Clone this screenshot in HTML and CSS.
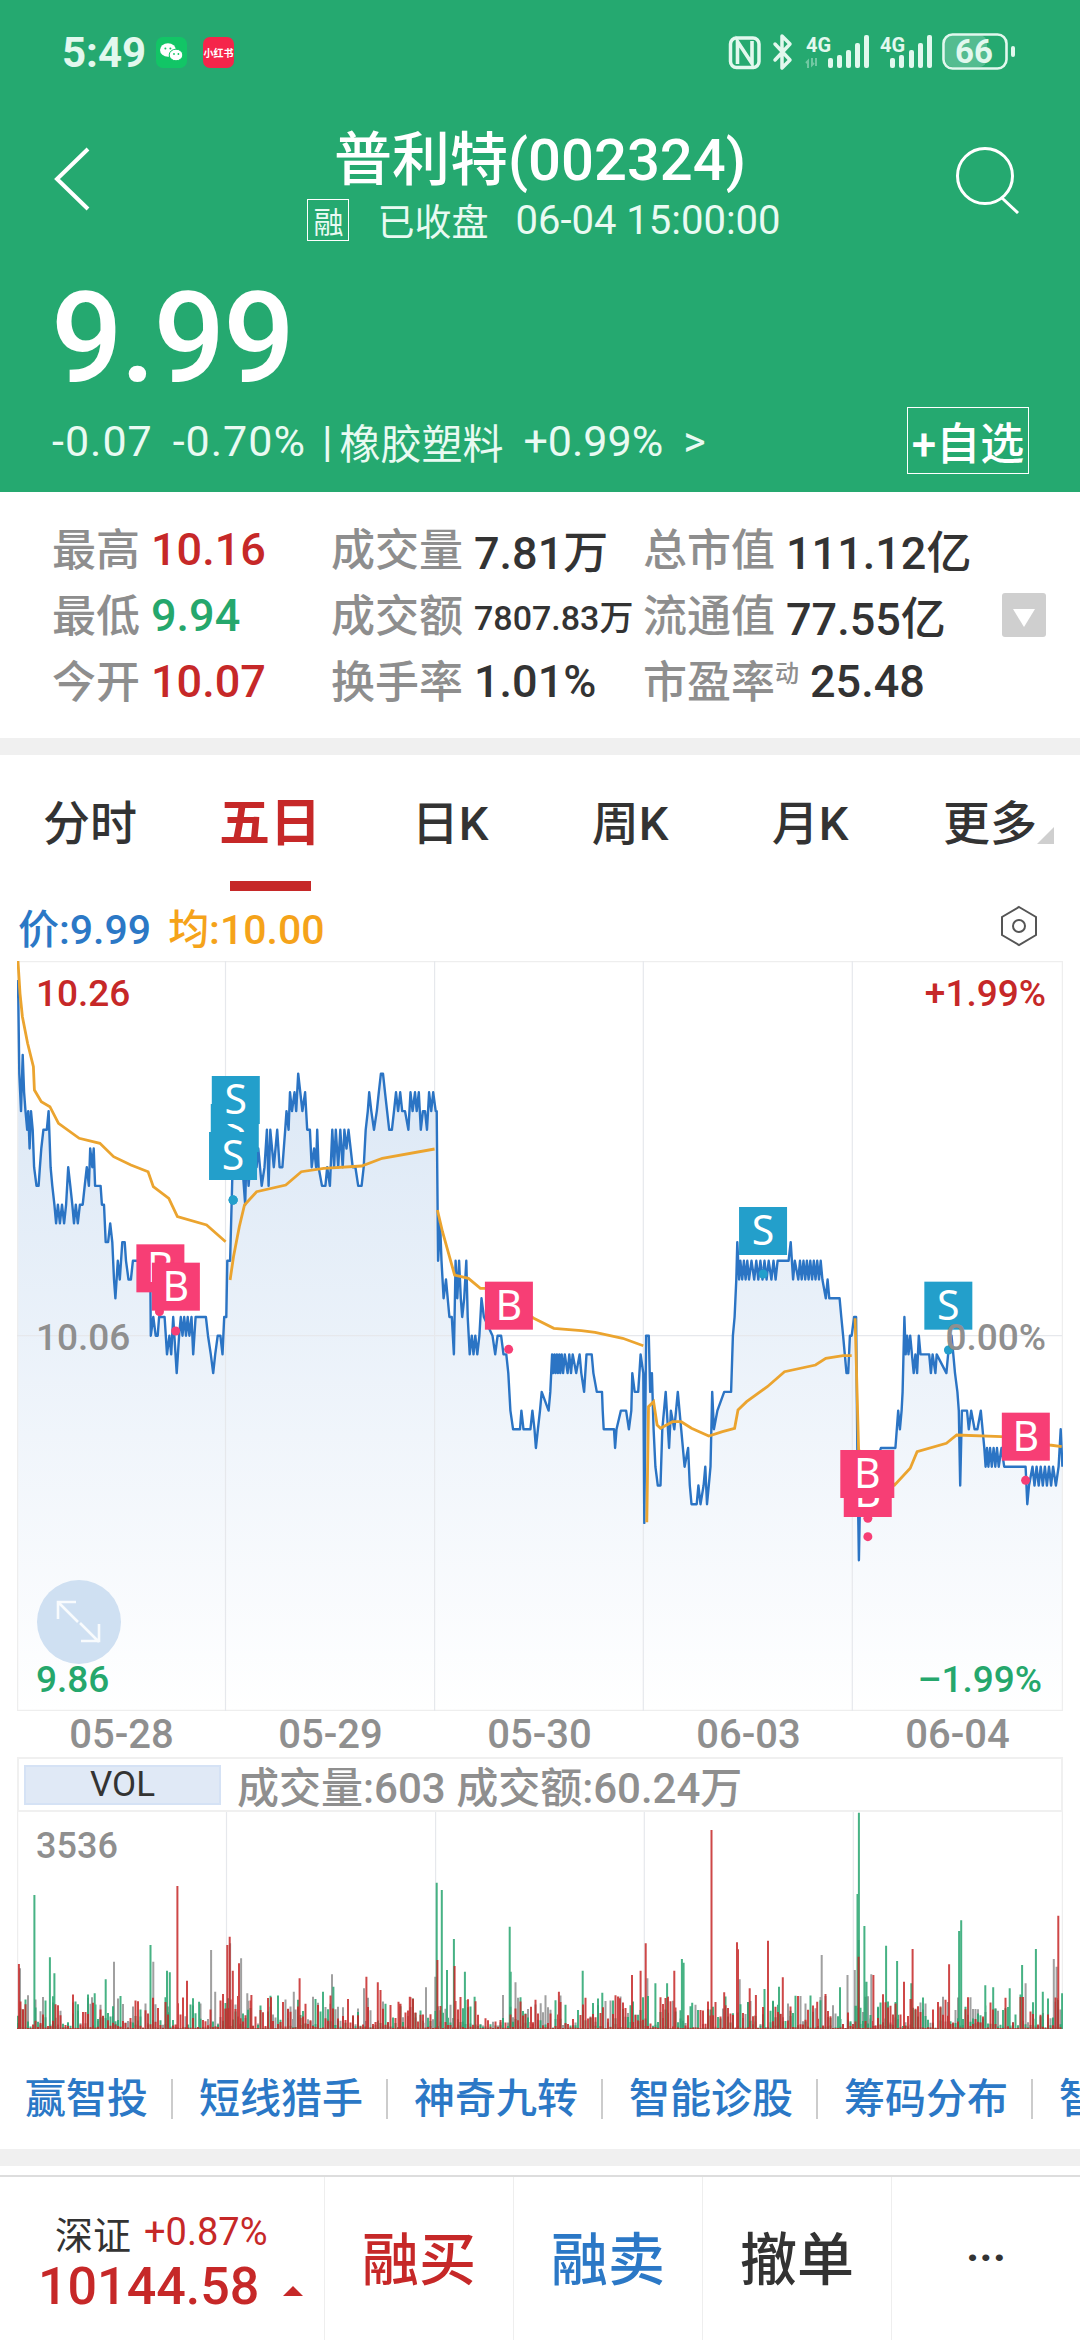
FILE: index.html
```html
<!DOCTYPE html>
<html lang="zh-CN">
<head>
  <meta charset="UTF-8">
  <meta name="viewport" content="width=device-width, initial-scale=1.0">
  <title>普利特(002324)</title>
  <link rel="stylesheet" href="styles.css">
</head>
<body>
  <header class="quote-head">
    <div class="status-bar">
      <span class="clock">5:49</span>
      <span class="app-icon wechat">
        <svg width="31" height="31" viewBox="0 0 31 31">
          <ellipse cx="12" cy="13" rx="8" ry="6.8" fill="#fff"/>
          <ellipse cx="20" cy="18" rx="6.8" ry="5.8" fill="#fff" stroke="#12c566" stroke-width="1"/>
          <circle cx="9.4" cy="11.5" r="1" fill="#12c566"/>
          <circle cx="14.4" cy="11.5" r="1" fill="#12c566"/>
          <circle cx="18" cy="17" r=".9" fill="#12c566"/>
          <circle cx="22.4" cy="17" r=".9" fill="#12c566"/>
        </svg>
      </span>
      <span class="app-icon rednote">小红书</span>
      <svg class="status-icons" width="293" height="40" viewBox="725 32 293 40">
        <rect x="730.5" y="38" width="28.5" height="29.5" rx="6" fill="none" stroke="#e2f8ee" stroke-width="3.5"/>
        <path d="M737.5 64V41.5l14.5 22V41" fill="none" stroke="#e2f8ee" stroke-width="3.6"/>
        <g fill="#e2f8ee">
          <rect x="828" y="58" width="5" height="10" rx="2"/>
          <rect x="837" y="55" width="5" height="13" rx="2"/>
          <rect x="846" y="50" width="5" height="18" rx="2"/>
          <rect x="855" y="43" width="5" height="25" rx="2"/>
          <rect x="864" y="35" width="5" height="33" rx="2"/>
          <rect x="890" y="58" width="5" height="10" rx="2"/>
          <rect x="899" y="55" width="5" height="13" rx="2"/>
          <rect x="909" y="50" width="5" height="18" rx="2"/>
          <rect x="918" y="43" width="5" height="25" rx="2"/>
          <rect x="927" y="35" width="5" height="33" rx="2"/>
          <rect x="1011" y="46" width="4" height="11" rx="2"/>
          <rect x="945" y="35" width="42" height="32" rx="8" opacity=".25"/>
          <path d="M808 68v-7l-2 2M812 58v7l2-2M816 58v8" stroke="#e2f8ee" stroke-width="2" fill="none" opacity=".4"/>
        </g>
        <path d="M775 44l15 16-8 8v-32l8 8-15 16" fill="none" stroke="#e2f8ee" stroke-width="3.5" stroke-linejoin="round" stroke-linecap="round"/>
        <rect x="943.5" y="34.5" width="63" height="34" rx="9" fill="none" stroke="#e2f8ee" stroke-width="2.6"/>
        <text class="net-label" x="806" y="52">4G</text>
        <text class="net-label" x="880" y="52">4G</text>
        <text class="battery-label" x="974" y="63">66</text>
      </svg>
    </div>

    <div class="topbar">
      <svg class="back-icon" width="38" height="64" viewBox="0 0 38 64">
        <path d="M35 2L4 32l31 30" fill="none" stroke="#fff" stroke-width="4"/>
      </svg>
      <div class="stock-title">
        <h1>普利特(002324)</h1>
        <p><span class="margin-tag">融</span><span class="market-state">已收盘</span><span>06-04 15:00:00</span></p>
      </div>
      <svg class="search-icon" width="66" height="68" viewBox="0 0 66 68">
        <circle cx="31" cy="30" r="27.5" fill="none" stroke="#fff" stroke-width="3"/>
        <path d="M48 52l16 15" stroke="#fff" stroke-width="3"/>
      </svg>
    </div>

    <div class="last-price">9.99</div>

    <div class="change-row">
      <div class="change-text">
        <span class="wide">-0.07</span>
        <span class="wide">-0.70%</span>
        <span class="pipe">|</span>
        <span class="sector">橡胶塑料</span>
        <span>+0.99%</span>
        <span>&gt;</span>
      </div>
      <button class="watch-btn">+自选</button>
    </div>
  </header>

  <section class="stats">
    <div class="stat"><label>最高</label><b class="up">10.16</b></div>
    <div class="stat"><label>成交量</label><b>7.81万</b></div>
    <div class="stat"><label>总市值</label><b>111.12亿</b></div>
    <div class="stat"><label>最低</label><b class="down">9.94</b></div>
    <div class="stat"><label>成交额</label><b class="small">7807.83万</b></div>
    <div class="stat"><label>流通值</label><b>77.55亿</b></div>
    <div class="stat"><label>今开</label><b class="up">10.07</b></div>
    <div class="stat"><label>换手率</label><b>1.01%</b></div>
    <div class="stat"><label>市盈率<sup>动</sup></label><b>25.48</b></div>
    <span class="stats-toggle"></span>
  </section>

  <div class="divider"></div>

  <nav class="tabs">
    <a>分时</a>
    <a class="active">五日</a>
    <a>日K</a>
    <a>周K</a>
    <a>月K</a>
    <a class="has-menu">更多</a>
  </nav>

  <div class="legend">
    <span class="price-tag">价:9.99</span>
    <span class="avg-tag">均:10.00</span>
    <svg class="legend-icon" width="38" height="42" viewBox="0 0 38 42">
      <path d="M19 2l17 10v18L19 40 2 30V12z" fill="none" stroke="#555" stroke-width="2"/>
      <circle cx="19" cy="21" r="6" fill="none" stroke="#555" stroke-width="2"/>
    </svg>
  </div>

  <div class="plot">
    <svg id="price-chart" width="1046" height="750" viewBox="17 961 1046 750"></svg>
    <span class="axis up axis-top-left">10.26</span>
    <span class="axis gray axis-mid-left">10.06</span>
    <span class="axis down axis-low-left">9.86</span>
    <span class="axis up axis-top-right">+1.99%</span>
    <span class="axis gray axis-mid-right">0.00%</span>
    <span class="axis down axis-low-right">–1.99%</span>
    <span class="expand-btn">
      <svg width="84" height="84" viewBox="0 0 84 84">
        <path d="M21 39V22h18M22 23l19 19M44 61h18V44M62 62L43 43" fill="none" stroke="#fff" stroke-width="2.6" opacity=".85"/>
      </svg>
    </span>
  </div>

  <div class="dates">
    <span>05-28</span><span>05-29</span><span>05-30</span><span>06-03</span><span>06-04</span>
  </div>

  <div class="vol-head">
    <span class="vol-tag">VOL</span>
    <span class="vol-text">成交量:603 成交额:60.24万</span>
  </div>

  <div class="vol-plot">
    <svg id="vol-chart" width="1046" height="217" viewBox="17 1812 1046 217"></svg>
    <span class="vol-max">3536</span>
  </div>

  <div class="tools">
    <a>赢智投</a>
    <a>短线猎手</a>
    <a>神奇九转</a>
    <a>智能诊股</a>
    <a>筹码分布</a>
    <a>智能选股</a>
  </div>

  <div class="divider bottom-gap"></div>

  <footer class="trade-bar">
    <div class="index-cell">
      <div class="index-top"><span>深证</span><span class="up">+0.87%</span></div>
      <div class="index-value up">10144.58<i class="arrow-up"></i></div>
    </div>
    <a class="trade-btn up">融买</a>
    <a class="trade-btn blue">融卖</a>
    <a class="trade-btn">撤单</a>
    <a class="trade-btn more">···</a>
  </footer>

  <script src="chart.js"></script>
</body>
</html>
```

FILE: styles.css
```css
* {
  box-sizing: border-box;
}

body {
  margin: 0;
  width: 1080px;
  height: 2340px;
  overflow: hidden;
  background: #fff;
  color: #333;
  font-family: Roboto, "Noto Sans CJK SC", sans-serif;
  font-weight: 500;
}

.up { color: #c62828; }
.down { color: #25a76c; }
.gray { color: #8f8f8f; }
.blue { color: #2b78c6; }

/* green quote header */
.quote-head {
  height: 492px;
  background: #25a970;
  color: #fff;
}

.status-bar {
  display: flex;
  align-items: center;
  height: 104px;
  padding-left: 62px;
}

.clock {
  width: 94px;
  font-size: 42px;
  font-weight: 700;
  color: #e2f8ee;
}

.app-icon {
  display: flex;
  align-items: center;
  justify-content: center;
  width: 31px;
  height: 31px;
  border-radius: 7px;
}

.wechat {
  background: #12c566;
}

.rednote {
  margin-left: 16px;
  background: #f5254a;
  color: #fff;
  font-size: 10px;
  font-weight: 700;
  white-space: nowrap;
}

.status-icons {
  margin-left: 491px;
}

.net-label {
  font-size: 20px;
  font-weight: 700;
  fill: #e2f8ee;
}

.battery-label {
  font-size: 33px;
  font-weight: 700;
  fill: #e2f8ee;
  text-anchor: middle;
}

.topbar {
  display: grid;
  grid-template-columns: 1fr auto 1fr;
  height: 128px;
  margin-top: 16px;
  padding: 0 53px;
}

.back-icon {
  margin-top: 27px;
}

.search-icon {
  justify-self: end;
  margin: 26px 7px 0 0;
}

.stock-title {
  text-align: center;
}

.stock-title h1 {
  margin: 0;
  font-size: 58px;
  font-weight: 500;
  line-height: 80px;
}

.stock-title p {
  display: flex;
  align-items: center;
  justify-content: center;
  margin: -2px 0 0;
  padding-left: 8px;
  height: 44px;
  font-size: 40px;
  font-weight: 400;
  color: #e9faf2;
  white-space: nowrap;
}

.margin-tag {
  display: flex;
  align-items: center;
  justify-content: center;
  width: 42px;
  height: 42px;
  margin-right: 28px;
  border: 1px solid #fff;
  font-size: 30px;
}

.market-state {
  margin-right: 27px;
  font-size: 37px;
}

.last-price {
  margin: 25px 0 0 51px;
  font-size: 126px;
  font-weight: 500;
  line-height: 130px;
  letter-spacing: -2px;
}

.change-row {
  display: flex;
  align-items: center;
  justify-content: space-between;
  height: 67px;
  margin-top: 4px;
  padding: 0 51px 0 52px;
}

.change-text {
  display: flex;
  align-items: center;
  gap: 20px;
  font-size: 43px;
  font-weight: 400;
  color: #e9faf2;
}

.wide {
  letter-spacing: 1px;
}

.pipe {
  margin: 0 -13px 0 -4px;
}

.sector {
  font-size: 41px;
}

.watch-btn {
  width: 122px;
  height: 67px;
  padding: 0;
  border: 1px solid #fff;
  background: none;
  color: #fff;
  font-family: inherit;
  font-size: 44px;
  font-weight: 500;
  white-space: nowrap;
}

/* day stats */
.stats {
  position: relative;
  display: grid;
  grid-template-columns: 279px 312px 1fr;
  grid-auto-rows: 66px;
  height: 246px;
  padding: 24px 0 0 52px;
}

.stat {
  display: flex;
  align-items: center;
  gap: 11px;
  font-size: 44px;
}

.stat label {
  margin-bottom: 4px;
  color: #8e8e8e;
  white-space: nowrap;
}

.stat sup {
  font-size: 24px;
  line-height: 0;
  vertical-align: 16px;
}

.stat b {
  font-weight: 500;
  font-size: 45px;
  white-space: nowrap;
}

.stat b.small {
  font-size: 34px;
}

.stats-toggle {
  position: absolute;
  top: 101px;
  left: 1002px;
  width: 44px;
  height: 44px;
  border-radius: 3px;
  background: #cfcfcf;
}

.stats-toggle::after {
  content: "";
  position: absolute;
  top: 16px;
  left: 11px;
  border-top: 18px solid #fff;
  border-left: 11px solid transparent;
  border-right: 11px solid transparent;
}

.divider {
  height: 17px;
  background: #f0f0f0;
}

/* period tabs */
.tabs {
  display: flex;
  height: 136px;
}

.tabs a {
  position: relative;
  flex: 1;
  text-align: center;
  font-size: 47px;
  line-height: 138px;
}

.tabs a.active {
  color: #c62828;
  font-size: 51px;
  font-weight: 700;
}

.tabs a.active::after {
  content: "";
  position: absolute;
  left: 50px;
  bottom: 0;
  width: 81px;
  height: 10px;
  background: #c62828;
}

.tabs a.has-menu::after {
  content: "";
  position: absolute;
  right: 26px;
  top: 72px;
  border-bottom: 17px solid #cfcfcf;
  border-left: 17px solid transparent;
}

.legend {
  display: flex;
  align-items: center;
  height: 70px;
  padding: 0 42px 0 18px;
  font-size: 41px;
}

.price-tag {
  color: #2b78c6;
}

.avg-tag {
  margin-left: 17px;
  color: #f5a31a;
}

.legend-icon {
  margin-left: auto;
}

/* intraday chart */
.plot {
  position: relative;
  width: 1046px;
  height: 750px;
  margin-left: 17px;
}

.plot svg,
.vol-plot svg {
  display: block;
}

.axis {
  position: absolute;
  font-size: 37px;
  line-height: 44px;
}

.axis-top-left { left: 19px; top: 11px; }
.axis-mid-left { left: 19px; top: 355px; }
.axis-low-left { left: 19px; top: 697px; }
.axis-top-right { right: 17px; top: 11px; }
.axis-mid-right { right: 17px; top: 355px; }
.axis-low-right { right: 21px; top: 697px; }

.expand-btn {
  position: absolute;
  left: 20px;
  top: 619px;
  width: 84px;
  height: 84px;
  border-radius: 50%;
  background: #cfe0f2;
}

.dates {
  display: grid;
  grid-template-columns: repeat(5, 209px);
  height: 46px;
  margin-left: 17px;
  font-size: 40px;
  line-height: 48px;
  text-align: center;
  color: #8f8f8f;
}

/* volume pane */
.vol-head {
  display: flex;
  align-items: center;
  width: 1046px;
  height: 55px;
  margin-left: 17px;
  padding-left: 5px;
  border: 2px solid #f0f0f0;
}

.vol-tag {
  width: 197px;
  height: 40px;
  border: 2px solid #d5e2f5;
  background: #e0e9f6;
  font-size: 35px;
  font-weight: 400;
  line-height: 36px;
  text-align: center;
}

.vol-text {
  margin-left: 16px;
  font-size: 42px;
  color: #8f8f8f;
}

.vol-plot {
  position: relative;
  width: 1046px;
  height: 217px;
  margin-left: 17px;
}

.vol-max {
  position: absolute;
  left: 19px;
  top: 12px;
  font-size: 36px;
  line-height: 44px;
  color: #8f8f8f;
}

/* tool shortcuts */
.tools {
  display: flex;
  align-items: center;
  height: 120px;
  padding: 20px 0 0 25px;
  overflow: hidden;
  white-space: nowrap;
}

.tools a {
  flex: none;
  width: 189px;
  margin-right: 26px;
  border-right: 2px solid #ccc;
  font-size: 41px;
  line-height: 40px;
  color: #2b78c6;
}

.tools a:first-child {
  width: 148px;
}

.bottom-gap {
  margin-bottom: 9px;
}

/* bottom trade bar */
.trade-bar {
  display: flex;
  height: 165px;
  border-top: 2px solid #ddd;
}

.index-cell {
  width: 324px;
  padding: 34px 0 0 38px;
}

.index-top {
  display: flex;
  align-items: center;
  gap: 13px;
  height: 42px;
  margin-bottom: 6px;
  padding-left: 17px;
  font-size: 38px;
  font-weight: 400;
}

.index-value {
  display: flex;
  align-items: center;
  height: 54px;
  font-size: 52px;
  font-weight: 500;
}

.arrow-up {
  margin: 10px 0 0 24px;
  border-bottom: 10px solid #c62828;
  border-left: 10px solid transparent;
  border-right: 10px solid transparent;
}

.trade-btn {
  width: 189px;
  border-left: 1px solid #eee;
  font-size: 57px;
  font-weight: 500;
  line-height: 168px;
  text-align: center;
}

.trade-btn.more {
  font-size: 44px;
  font-weight: 700;
  line-height: 162px;
}
```

FILE: chart.js
```js
// Five-day intraday chart and volume bars.
// Data x values are on a 3136-unit grid across the 1080px page.
const SVG_NS = 'http://www.w3.org/2000/svg';
const toX = (u) => u * 1080 / 3136;
const MID_Y = 1335.7;
const CENT_H = 18.72;

// price path as "x,cents above 10.06"
const pricePath = [
  '50,19 53,18 56,14 61,12 66,15 70,13 74,12 79,11 82,12 86,10 90,12 95,11 99,9 106,8 112,8 116,9 120,10 126,11 136,11 141,12',
  '147,9 152,8 158,7 163,6 168,7 174,6 180,7 186,6 192,7 198,9 204,8 210,7 215,6 220,7 226,6 232,7 240,7 246,8 252,9 258,8',
  '262,10 268,9 272,10 276,8 292,8 296,7 302,7 307,5 314,5 320,6 326,5 331,3 335,2 342,4 348,3 355,5 362,5 366,4 373,3 380,3',
  '386,4 436,4 438,0 445,1 452,0 458,0 462,1 478,1 485,-1 492,0 497,-1 503,1 513,-2 520,0 525,1 530,0 535,1 540,0 545,1 550,0',
  '556,1 561,-1 568,1 598,1 604,0 612,-1 619,-2 625,-1 632,0 640,0 646,-1 651,1 657,1 660,4 668,4 674,8 678,11 700,10 712,7',
  '716,10 722,8 730,10 745,9 750,10 755,9 760,8 768,9 775,11 780,8 785,11 795,9 805,11 812,9 820,9 828,11 832,12 838,11 842,13',
  '848,12 855,13 860,12 866,14 872,13 878,12 886,13 892,11 900,11 905,9 912,10 918,9 921,11 925,9 935,8 945,8 950,9 958,8',
  '965,11 970,9 975,11 982,9 988,11 995,9 1000,11 1006,10 1012,11 1018,10 1024,9 1032,9 1040,8 1050,8 1056,9 1062,11 1068,12',
  '1072,13 1078,12 1086,11 1094,12 1100,13 1106,14 1112,14 1118,13 1124,12 1130,11 1138,11 1144,12 1150,13 1156,12 1162,13',
  '1168,12 1176,12 1186,11 1192,13 1198,12 1205,13 1210,12 1216,13 1222,11 1228,12 1234,12 1240,11 1246,13 1252,12 1258,13',
  '1265,12 1268,12 1272,4 1278,6 1282,4 1288,2 1295,3 1300,2 1305,1 1312,1 1318,-1 1323,4 1328,2 1333,4 1338,2 1342,1 1348,2',
  '1354,4 1358,1 1364,-1 1370,0 1375,-1 1380,0 1386,-1 1392,0 1398,2 1405,1 1430,0 1438,-1 1445,0 1455,0 1462,-1 1470,-1',
  '1476,-2 1482,-4 1490,-5 1510,-5 1514,-4 1520,-5 1540,-5 1546,-4 1552,-5 1556,-6 1562,-5 1568,-4 1573,-3 1593,-4 1598,-3',
  '1603,-1 1606,-2 1610,-1 1613,-2 1617,-1 1620,-2 1624,-1 1627,-2 1631,-1 1635,-2 1640,-1 1648,-2 1653,-1 1658,-2 1663,-1',
  '1673,-2 1683,-1 1688,-2 1696,-3 1703,-1 1718,-1 1723,-2 1733,-3 1748,-3 1750,-4 1753,-5 1783,-5 1786,-6 1790,-5 1803,-4',
  '1818,-4 1826,-5 1833,-4 1836,-2 1843,-3 1853,-3 1860,-1 1868,-2 1871,-10 1876,0',
  '1884,0 1888,-3 1893,-2 1898,-5 1903,-7 1910,-8 1918,-8 1923,-5 1933,-3 1943,-6 1948,-4 1958,-5 1968,-3 1978,-5 1988,-7',
  '1998,-6 2003,-8 2008,-9 2023,-9 2028,-8 2034,-9 2043,-8 2048,-7 2053,-9 2058,-8 2063,-7 2068,-3 2073,-5 2083,-4 2103,-3',
  '2123,-3 2128,0 2133,1 2138,3 2141,5 2146,3 2150,4 2155,3 2160,4 2165,3 2170,4 2175,3 2182,4 2190,3 2196,4 2202,3 2208,4',
  '2214,3 2220,4 2226,3 2232,4 2240,3 2246,4 2252,3 2258,4 2266,4 2274,4 2280,4 2290,4 2296,5 2303,3 2308,4 2318,3 2323,4',
  '2328,3 2333,4 2338,3 2343,4 2348,3 2353,4 2358,3 2363,4 2368,3 2373,4 2378,3 2383,4 2388,3 2398,2 2403,3 2408,2 2438,2',
  '2443,1 2448,0 2453,-1 2458,-2 2463,-2 2468,0 2473,0 2480,1 2486,1 2490,-7 2494,-12 2498,-8 2516,-9 2524,-8 2558,-6 2600,-6',
  '2608,-4 2613,-5 2618,-4 2621,-3 2626,1 2630,-1 2634,0 2638,-1 2643,0 2653,-2 2658,-1 2663,-2 2668,0 2673,-1 2698,-1 2703,-2',
  '2708,-1 2716,-2 2720,-1 2748,-2 2753,-1 2763,0 2768,-1 2773,-2 2780,-3 2784,-4 2788,-8 2793,-4 2808,-4 2813,-5 2820,-4 2830,-5',
  '2838,-5 2848,-4 2858,-6 2862,-7 2866,-6 2870,-7 2875,-6 2880,-7 2885,-6 2890,-7 2895,-6 2900,-7 2908,-6 2916,-7 2930,-7',
  '2960,-7 2968,-7 2978,-7 2983,-9 2988,-8 2998,-7 3004,-8 3010,-7 3016,-8 3022,-7 3028,-8 3034,-7 3040,-8 3046,-7 3052,-8',
  '3058,-7 3066,-8 3074,-7 3080,-5 3085,-7'
].join(' ').split(' ').map((p) => {
  const [u, cents] = p.split(',').map(Number);
  return [toX(u), MID_Y - cents * CENT_H];
});

// average line, one run per session as [x, y on a 3x grid from 960]
const avgRuns = [
  [[52, 0], [58, 100], [65, 170], [80, 250], [97, 320], [100, 390], [120, 425], [145, 440], [170, 490], [230, 535], [290, 550],
   [330, 590], [380, 615], [430, 635], [445, 680], [490, 715], [515, 770], [600, 795], [655, 845]],
  [[668, 960], [678, 890], [695, 800], [710, 735], [745, 695], [830, 675], [875, 635], [940, 625], [1050, 618], [1110, 595], [1262, 567]],
  [[1270, 750], [1285, 815], [1320, 945], [1360, 955], [1395, 985], [1410, 985], [1550, 1075], [1608, 1105], [1688, 1112],
   [1728, 1117], [1808, 1135], [1868, 1157]],
  [[1878, 1687], [1883, 1340], [1898, 1325], [1908, 1395], [1918, 1405], [1953, 1385], [1978, 1385], [2008, 1405], [2058, 1428],
   [2098, 1415], [2133, 1405], [2143, 1350], [2168, 1325], [2228, 1280], [2278, 1235], [2368, 1215], [2398, 1195], [2448, 1187], [2473, 1187]],
  [[2483, 1075], [2493, 1470], [2598, 1575], [2643, 1525], [2663, 1475], [2748, 1450], [2778, 1425], [2908, 1430], [3048, 1455], [3083, 1460]]
];

const GRID_X = [225.5, 434.6, 643.3, 852.3];

// markers as [kind, left, top, dot x, dot y]; later entries are drawn on top
const markers = [
  ['B', 396, 853, 463, 1055],
  ['B', 441, 908, 510, 1113],
  ['S', 612, 432, 677, 720],
  ['S', 607, 516, 677, 720],
  ['S', 615, 348, 677, 720],
  ['B', 1408, 965, 1477, 1168],
  ['S', 2146, 741, 2216, 942],
  ['S', 2684, 965, 2754, 1170],
  ['B', 2450, 1527, 2520, 1730],
  ['B', 2440, 1470, 2520, 1675, 54],
  ['B', 2909, 1358, 2978, 1561]
];

// tall volume bars as [x, y on a 3x grid from 1740]
const volSpikes = {
  gray: [[58, 685], [331, 665], [445, 665], [267, 772], [613, 630], [625, 755], [668, 610], [700, 655], [718, 760], [853, 755], [964, 703],
    [1057, 745], [1237, 742], [1264, 710], [1497, 727], [1570, 790], [1880, 715], [2148, 718], [2386, 645], [2461, 705], [2493, 600],
    [2482, 690], [2530, 703], [3060, 657], [3068, 680], [2978, 730]],
  green: [[100, 465], [145, 652], [158, 700], [275, 760], [307, 718], [437, 615], [485, 692], [493, 697], [578, 785], [938, 755], [968, 740],
    [1268, 428], [1283, 450], [1298, 690], [1318, 597], [1350, 695], [1378, 770], [1480, 560], [1483, 695], [1692, 692], [1749, 758], [1903, 730],
    [1937, 730], [1980, 657], [1985, 668], [2010, 788], [2220, 747], [2262, 740], [2439, 742], [2494, 218], [2490, 462], [2510, 558], [2516, 725],
    [2573, 617], [2605, 663], [2646, 730], [2785, 573], [2791, 541], [2861, 736], [2884, 742], [2932, 745], [2968, 675], [3008, 627], [3028, 755], [3084, 760]],
  red: [[55, 672], [515, 438], [543, 722], [660, 615], [667, 590], [676, 692], [694, 670], [730, 765], [787, 772], [870, 715], [1064, 710], [1097, 727],
    [1105, 750], [1157, 785], [1190, 770], [1270, 660], [1320, 678], [1542, 800], [1623, 755], [1800, 775], [1835, 705], [1860, 692], [1875, 610],
    [1958, 692], [2066, 270], [2103, 757], [2140, 607], [2143, 628], [2177, 745], [2195, 765], [2230, 602], [2273, 712], [2373, 785], [2493, 650],
    [2536, 705], [2625, 725], [2650, 627], [2756, 673], [3073, 527]]
};

const VOL_COLORS = { gray: '#909090', green: '#27a56f', red: '#c62828' };

function el(name, attrs, parent) {
  const node = document.createElementNS(SVG_NS, name);
  Object.keys(attrs).forEach((key) => node.setAttribute(key, attrs[key]));
  parent.appendChild(node);
  return node;
}

function pointsToPath(points) {
  return points.map((p, i) => (i ? 'L' : 'M') + p[0].toFixed(1) + ' ' + p[1].toFixed(1)).join('');
}

function drawPrice() {
  const svg = document.getElementById('price-chart');
  const defs = el('defs', {}, svg);
  const grad = el('linearGradient', { id: 'area', x1: 0, y1: 961, x2: 0, y2: 1711, gradientUnits: 'userSpaceOnUse' }, defs);
  el('stop', { offset: 0, 'stop-color': '#d6e4f4' }, grad);
  el('stop', { offset: 1, 'stop-color': '#ffffff' }, grad);

  const last = pricePath[pricePath.length - 1];
  el('path', {
    d: pointsToPath(pricePath) + 'L' + last[0] + ' 1710L17.5 1710Z',
    fill: 'url(#area)'
  }, svg);

  // frame and grid
  el('rect', { x: 17.5, y: 961.5, width: 1045, height: 749, fill: 'none', stroke: '#eeeeee', 'stroke-width': 1.5 }, svg);
  GRID_X.forEach((x) => {
    el('line', { x1: x, x2: x, y1: 961, y2: 1711, stroke: '#e6e8ec', 'stroke-width': 1.2 }, svg);
  });
  el('line', { x1: 17, x2: 1062, y1: MID_Y, y2: MID_Y, stroke: '#e6e8ec', 'stroke-width': 1.2 }, svg);

  el('path', { d: pointsToPath(pricePath), fill: 'none', stroke: '#2b74c4', 'stroke-width': 2.4, 'stroke-linejoin': 'round' }, svg);
  avgRuns.forEach((run) => {
    const points = run.map((p) => [toX(p[0]), 960 + p[1] / 3]);
    el('path', { d: pointsToPath(points), fill: 'none', stroke: '#eba42f', 'stroke-width': 2.8 }, svg);
  });

  markers.forEach(([kind, left, top, dotU, dotZ, wide]) => {
    const color = kind === 'B' ? '#f73e75' : '#239fcb';
    const x = toX(left);
    const y = 960 + top / 3;
    const w = wide || 48;
    el('circle', { cx: toX(dotU), cy: 960 + dotZ / 3, r: 4.5, fill: color }, svg);
    el('rect', { x: x, y: y, width: w, height: 48, fill: color }, svg);
    const label = el('text', {
      x: x + w / 2,
      y: y + 38,
      fill: '#fff',
      'font-size': 41,
      'font-weight': 400,
      'font-family': '"Noto Sans", sans-serif',
      'text-anchor': 'middle'
    }, svg);
    label.textContent = kind;
  });
}

function drawVolume() {
  const svg = document.getElementById('vol-chart');
  const BASE = 2029;
  const paths = { gray: '', green: '', red: '' };

  // fill in the low bars with a small fixed-seed generator
  let seed = 20240604;
  const rand = () => {
    seed = (seed * 1664525 + 1013904223) % 4294967296;
    return seed / 4294967296;
  };
  Object.keys(paths).forEach((key) => {
    for (let x = 18; x < 1062; x += 2.5) {
      const r = rand();
      const h = 1 + r * r * r * 34;
      paths[key] += 'M' + x.toFixed(1) + ' ' + BASE + 'V' + (BASE - h).toFixed(1);
    }
    volSpikes[key].forEach(([u, z]) => {
      paths[key] += 'M' + toX(u).toFixed(1) + ' ' + BASE + 'V' + (1740 + z / 3).toFixed(1);
    });
  });

  el('path', { d: 'M17.5 1812V2029M1062.5 1812V2029', stroke: '#eeeeee', 'stroke-width': 1.5 }, svg);
  [226.5, 435.6, 644.3, 853.3].forEach((x) => {
    el('line', { x1: x, x2: x, y1: 1812, y2: 2029, stroke: '#e6e8ec', 'stroke-width': 1.2 }, svg);
  });
  ['gray', 'green', 'red'].forEach((key) => {
    el('path', { d: paths[key], stroke: VOL_COLORS[key], 'stroke-width': 2, opacity: 0.85 }, svg);
  });
}

drawPrice();
drawVolume();
```
